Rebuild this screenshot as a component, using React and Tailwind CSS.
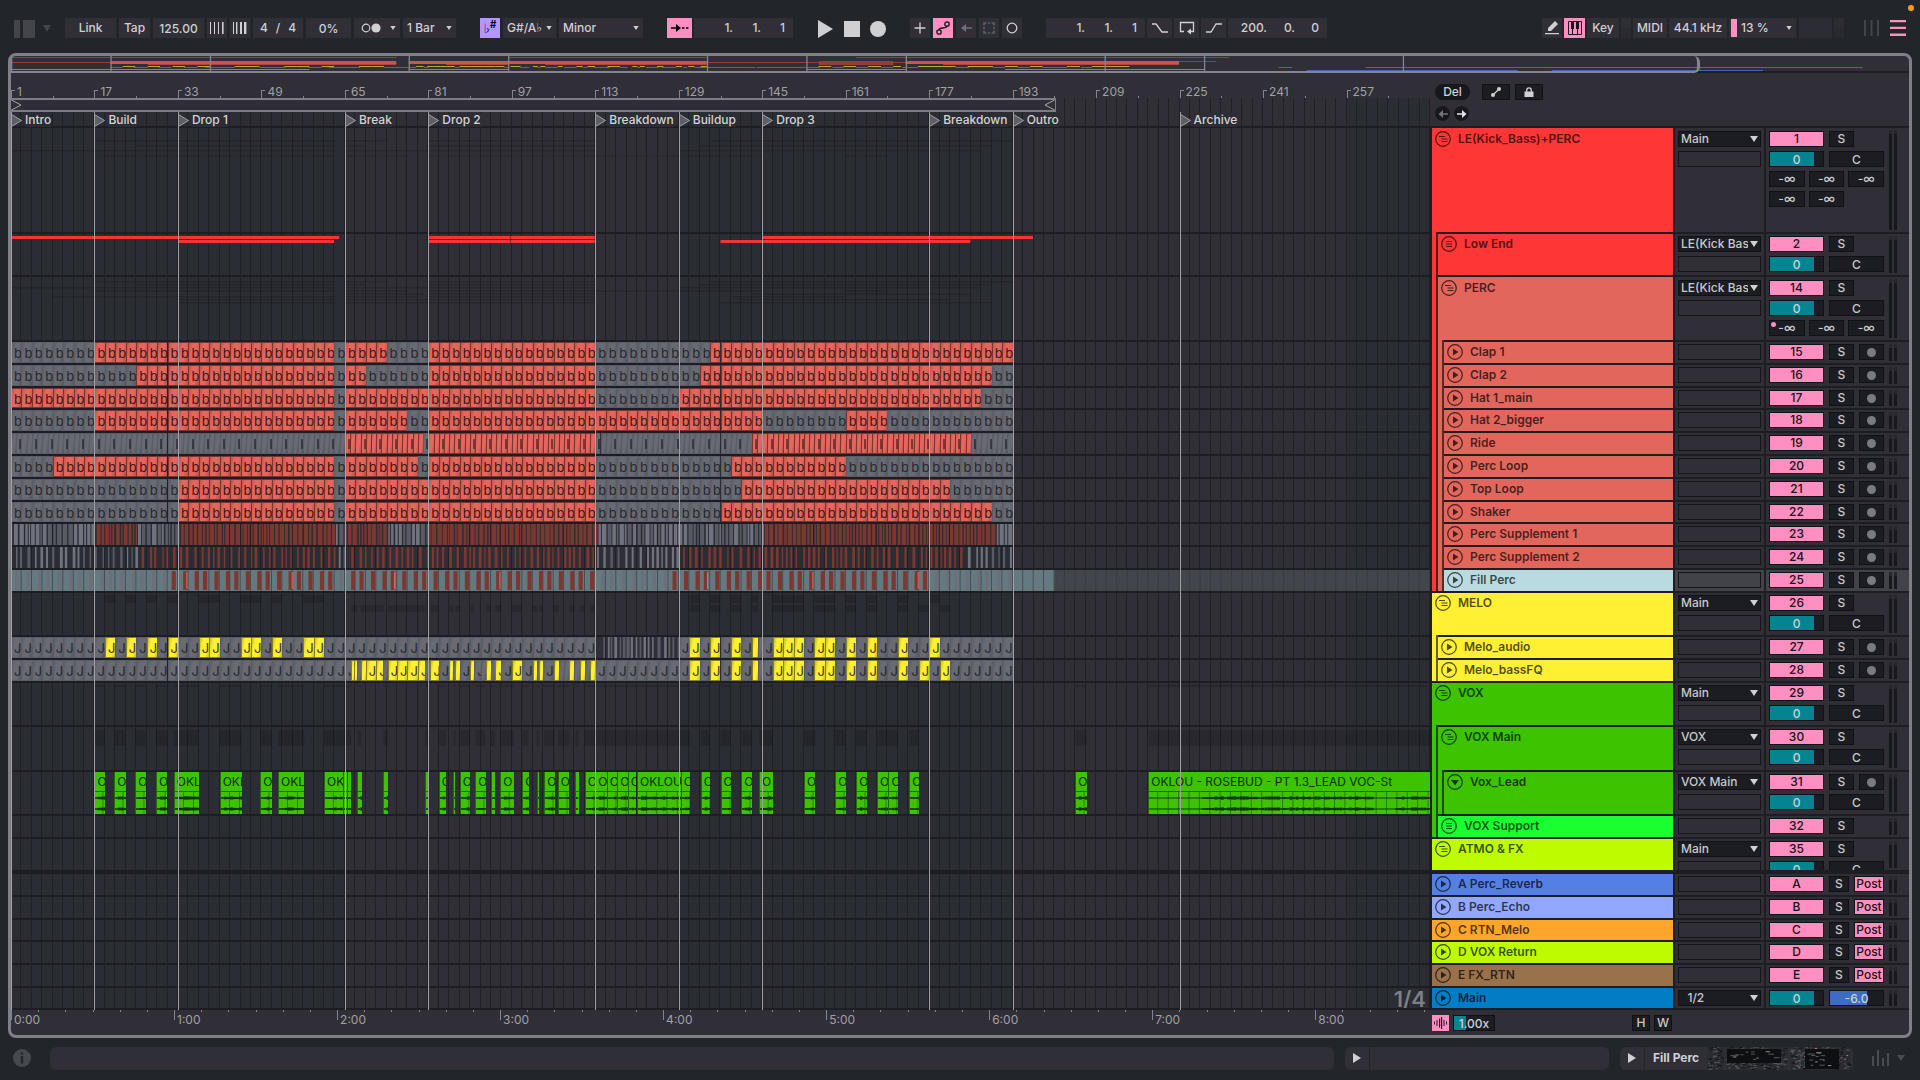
import React from "react";
import clsx from "clsx";

// One timeline unit is two bars; the visible arrangement is 136 units wide
const UNITS = 136;
const pct = (u) => `${(u / UNITS) * 100}%`;

const GRID =
    "bg-[repeating-linear-gradient(90deg,transparent_0_calc(0.735294%-1px),#1f2126_calc(0.735294%-1px)_0.735294%),repeating-linear-gradient(90deg,#2a2d33_0_23.5294%,#302f37_23.5294%_47.0588%)]";

const locators = [
    { at: 0, name: "Intro" },
    { at: 8, name: "Build" },
    { at: 16, name: "Drop 1" },
    { at: 32, name: "Break" },
    { at: 40, name: "Drop 2" },
    { at: 56, name: "Breakdown" },
    { at: 64, name: "Buildup" },
    { at: 72, name: "Drop 3" },
    { at: 88, name: "Breakdown" },
    { at: 96, name: "Outro" },
    { at: 112, name: "Archive" }
];

// Active (coloured) ranges, everything else up to unit 96 is a muted clip
const loops = {
    clap1: [[8, 31], [32, 36], [40, 56], [67, 96]],
    clap2: [[12, 31], [32, 34], [40, 56], [66, 94]],
    hat1: [[0, 31], [32, 40], [40, 56], [64, 93]],
    hat2: [[8, 31], [32, 38], [40, 56], [56, 72], [80, 84]],
    ride: [[32, 39.5], [40, 56], [71, 92]],
    perc: [[4, 31], [32, 39], [40, 56], [69, 80]],
    top: [[16, 31], [32, 40], [40, 56], [70, 90]],
    shaker: [[16, 31], [32, 40], [40, 56], [68, 94]],
    sup1: [[8, 12], [16, 31], [32, 36], [40, 56], [72, 94.3]],
    sup2: [[12, 31], [32, 40], [40, 56], [64, 91]],
    fill: [[15.5, 31], [32, 40], [40, 56], [63, 88]]
};

const meloTail = [[65, 66], [67, 68], [69, 70], [71, 71.6], [73, 74], [74, 75], [75, 76], [77, 78], [78, 79], [80, 81], [82, 83], [85, 86]];
const meloAudio = [[9, 10], [11, 12], [13, 14], [15, 16], [18, 19], [19, 20], [22, 23], [23, 24], [25, 26], [28, 29], [29, 30], ...meloTail, [88, 89]];
const meloBass = [
    [32.6, 32.9], [32.9, 33.2], [33.5, 34], [34, 35], [35, 35.7], [36.1, 37], [37, 38], [38, 39], [39, 39.7], [40.2, 41], [42, 42.4],
    [42.6, 43], [44, 44.4], [45.5, 46], [46.4, 47], [48, 49], [50, 50.4], [50.6, 51], [52, 52.5], [53.5, 54], [54.5, 55],
    [55.5, 56], ...meloTail, [87, 88], [89, 90]
];

const vox = [
    [8, 9], [9.9, 11], [11.9, 12.9], [13.9, 15], [15.6, 18], [20, 22.1], [23.9, 25], [25.6, 28.1], [30, 31.8], [31.8, 32.2],
    [32.2, 32.6], [33.2, 33.6], [35.7, 36.1], [39.7, 40], [41, 41.7], [42.4, 42.6], [43, 44], [44.5, 45.5], [46, 46.4],
    [46.9, 48.2], [49, 49.6], [50.4, 50.6], [51.1, 52.1], [52.4, 53.5], [54.1, 54.4], [55, 56], [56, 57.1], [57.1, 58.1],
    [58.1, 59.1], [59.1, 59.9], [60, 64.2], [64.2, 65.1], [66.1, 67], [68, 69], [70, 71], [71.7, 73], [76, 77.1], [79, 80],
    [81, 82], [83, 84.1], [84.1, 85], [86.1, 87], [102, 103.1], [109, 136]
];

const lowEnd = [
    [0, 31.5, 0], [16, 31, 1], [40, 47.9, 0], [47.9, 56, 0], [40, 47.9, 1], [47.9, 56, 1], [68, 92, 1], [72, 98, 0]
];

const tracks = [
    { n: "1", name: "LE(Kick_Bass)+PERC", depth: 0, icon: "group", h: 106, bg: "bg-[#ff3636]", out: "Main", sends: 5, vol: true, lane: "leGroup" },
    { n: "2", name: "Low End", depth: 1, icon: "folded", h: 43, bg: "bg-[#ff3636]", out: "LE(Kick Bass)", vol: true, lane: "low" },
    { n: "14", name: "PERC", depth: 1, icon: "group", h: 65, bg: "bg-[#e2665c]", out: "LE(Kick Bass)", sends: 3, vol: true, lane: "percGroup" },
    { n: "15", name: "Clap 1", depth: 2, h: 23, bg: "bg-[#e2665c]", rec: true, lane: "clap1" },
    { n: "16", name: "Clap 2", depth: 2, h: 23, bg: "bg-[#e2665c]", rec: true, lane: "clap2" },
    { n: "17", name: "Hat 1_main", depth: 2, h: 22, bg: "bg-[#e2665c]", rec: true, lane: "hat1" },
    { n: "18", name: "Hat 2_bigger", depth: 2, h: 23, bg: "bg-[#e2665c]", rec: true, lane: "hat2" },
    { n: "19", name: "Ride", depth: 2, h: 23, bg: "bg-[#e2665c]", rec: true, lane: "ride" },
    { n: "20", name: "Perc Loop", depth: 2, h: 23, bg: "bg-[#e2665c]", rec: true, lane: "perc" },
    { n: "21", name: "Top Loop", depth: 2, h: 23, bg: "bg-[#e2665c]", rec: true, lane: "top" },
    { n: "22", name: "Shaker", depth: 2, h: 22, bg: "bg-[#e2665c]", rec: true, lane: "shaker" },
    { n: "23", name: "Perc Supplement 1", depth: 2, h: 23, bg: "bg-[#e2665c]", rec: true, lane: "sup1" },
    { n: "24", name: "Perc Supplement 2", depth: 2, h: 23, bg: "bg-[#e2665c]", rec: true, lane: "sup2" },
    { n: "25", name: "Fill Perc", depth: 2, h: 23, bg: "bg-[#b8dae0]", rec: true, selected: true, lane: "fill" },
    { n: "26", name: "MELO", depth: 0, icon: "group", h: 44, bg: "bg-[#fff034]", out: "Main", vol: true, lane: "meloGroup" },
    { n: "27", name: "Melo_audio", depth: 1, h: 23, bg: "bg-[#fff034]", rec: true, lane: "meloAudio", family: "yellow" },
    { n: "28", name: "Melo_bassFQ", depth: 1, h: 23, bg: "bg-[#fff034]", rec: true, lane: "meloBass", family: "yellow" },
    { n: "29", name: "VOX", depth: 0, icon: "group", h: 44, bg: "bg-[#3dc300]", out: "Main", vol: true, lane: "voxGroup" },
    { n: "30", name: "VOX Main", depth: 1, icon: "group", h: 45, bg: "bg-[#3dc300]", out: "VOX", vol: true, lane: "voxMain", family: "green" },
    { n: "31", name: "Vox_Lead", depth: 2, icon: "open", h: 44, bg: "bg-[#3dc300]", out: "VOX Main", vol: true, rec: true, lane: "vox", family: "green" },
    { n: "32", name: "VOX Support", depth: 1, icon: "folded", h: 23, bg: "bg-[#1aff2f]", family: "green" },
    { n: "35", name: "ATMO & FX", depth: 0, icon: "group", h: 33, bg: "bg-[#bffb00]", out: "Main", vol: true }
];

const returns = [
    { n: "A", name: "A Perc_Reverb", h: 23, bg: "bg-[#5480e4]" },
    { n: "B", name: "B Perc_Echo", h: 23, bg: "bg-[#92a7ff]" },
    { n: "C", name: "C RTN_Melo", h: 22, bg: "bg-[#ffa529]" },
    { n: "D", name: "D VOX Return", h: 23, bg: "bg-[#bffb00]" },
    { n: "E", name: "E FX_RTN", h: 23, bg: "bg-[#99724b]" }
];

const strips = {
    red: ["bg-[#ff3636]", "bg-[#e2665c]"],
    yellow: ["bg-[#fff034]", "bg-[#fff034]"],
    green: ["bg-[#3dc300]", "bg-[#3dc300]"]
};

// Small repeatable random source for stripes and wave forms
const seeded = (seed) => () => {
    seed = (seed * 16807) % 2147483647;
    return seed / 2147483647;
};

const inside = (ranges, u) => ranges.some(([a, b]) => u >= a && u < b);

/* ---------- icons ---------- */

const TrackIcon = ({ type = "play" }) => (
    <svg viewBox="0 0 16 16" className="size-4 shrink-0 text-black/70" fill="none" stroke="currentColor">
        <circle cx="8" cy="8" r="7.3" strokeWidth="1.2" />
        {type === "group" && <path d="M4 5.500h6M6.500 8h6M6.500 10.500h6" strokeWidth="1.200" />}
        {type === "folded" && <path d="M5 5.500h6M5 8h6M5 10.500h6" strokeWidth="1.200" />}
        {type === "play" && <path d="M6 4.5v7L11.5 8z" fill="currentColor" stroke="none" />}
        {type === "open" && <path d="M4 6h8l-4 5.5z" fill="currentColor" stroke="none" />}
    </svg>
);

const Caret = ({ className }) => (
    <svg viewBox="0 0 8 6" className={clsx("pointer-events-none absolute", className)}>
        <path d="M0 0h8L4 6z" fill="currentColor" />
    </svg>
);

const Metronome = ({ bars }) => (
    <button aria-label="Nudge" className="flex h-5 w-5 items-center justify-center bg-[#302f37]">
        <svg viewBox="0 0 14 12" className="h-3 w-3.5">
            {bars.map(([x, w]) => <rect key={x} x={x} width={w} height="12" fill="#d0d0d3" />)}
        </svg>
    </button>
);

/* ---------- lanes ---------- */

const clipColors = {
    red: "bg-[linear-gradient(100deg,#c65a51_0_8%,#e4665c_30%_62%,#b5514a)] border-[#7c3430] text-[#3a1614]",
    grey: "bg-[linear-gradient(100deg,#5f6169_0_8%,#696b74_30%_62%,#54575d)] border-[#5a5d65] text-[#25272c]",
    yellow: "bg-[linear-gradient(100deg,#d6c82a_0_8%,#fff034_30%_70%,#c8bb2a)] border-[#8a811c] text-[#3a360a]"
};

const Clip = ({ from, to, color, label }) => (
    <div
        className={clsx("absolute inset-y-0 overflow-hidden border-y border-l pl-0.5 text-[13px] leading-5", clipColors[color])}
        style={{ left: pct(from), width: pct(to - from) }}
    >
        {label}
    </div>
);

const LoopLane = ({ ranges }) =>
    Array.from({ length: 96 }, (_, k) => (
        <Clip key={k} from={k} to={k + 1} label="b" color={inside(ranges, k) ? "red" : "grey"} />
    ));

const RideLane = ({ ranges }) => (
    <>
        {Array.from({ length: 192 }, (_, k) => (
            <Clip key={k} from={k / 2} to={k / 2 + 0.5} color={inside(ranges, k / 2) ? "red" : "grey"} />
        ))}
        {Array.from({ length: 64 }, (_, k) => (
            <div key={k} className="absolute top-1.5 h-2.5 w-0.5 bg-black/45" style={{ left: pct(k * 1.5 + 0.8) }} />
        ))}
    </>
);

const MeloLane = ({ ranges, sparse }) => {
    const muted = [];
    let prev = 0;
    [...ranges, [96, 96]].forEach(([a, b]) => {
        for (let u = prev; u < a - 0.05; ) {
            const next = Math.min(Math.floor(u + 1.001), a);
            if (!(sparse && u >= 56 && u < 64)) muted.push([u, next]);
            u = next;
        }
        prev = b;
    });
    return (
        <>
            {muted.map(([a, b]) => <Clip key={a} from={a} to={b} color="grey" label={b - a > 0.6 ? "J" : ""} />)}
            {ranges.map(([a, b]) => <Clip key={a} from={a} to={b} color="yellow" label={b - a > 0.6 ? "J" : ""} />)}
        </>
    );
};

const StripeLane = ({ active, from = 0, to = 96, seed, width, gap }) => {
    const rnd = seeded(seed);
    const bars = [];
    for (let x = from * 10; x < to * 10; ) {
        const w = width[0] + rnd() * width[1];
        bars.push({ x, w, fill: inside(active, x / 10) ? "#7d3731" : rnd() > 0.4 ? "#70737e" : "#585b64" });
        x += w + gap[0] + rnd() * gap[1];
    }
    return (
        <svg viewBox="0 0 1360 20" preserveAspectRatio="none" className="absolute inset-0 size-full">
            {bars.map((b) => <rect key={b.x} x={b.x} width={b.w} height="20" fill={b.fill} />)}
        </svg>
    );
};

const FillLane = ({ ranges }) => (
    <svg viewBox="0 0 1360 20" preserveAspectRatio="none" className="absolute inset-0 size-full">
        <rect width="1360" height="20" fill="#43454c" />
        <rect width="1000" height="20" fill="#657a80" />
        {Array.from({ length: 136 }, (_, k) => <rect key={k} x={k * 10 + 9.2} width="0.9" height="20" fill="#35383f" opacity="0.7" />)}
        {Array.from({ length: 96 }, (_, k) => {
            const hot = inside(ranges, k + 0.6);
            const x = k * 10 + 4 + (k % 3);
            return (
                <g key={k}>
                    <rect x={x} y="1" width={hot ? 4 : 3} height="18" fill={hot ? "#7d3731" : "#6c6f7a"} />
                    {hot && k % 10 === 6 && <rect x={x + 3} y="2" width="1" height="16" fill="#e2665c" />}
                </g>
            );
        })}
    </svg>
);

const Shadows = ({ ranges, y, h, height }) => (
    <svg viewBox={`0 0 1360 ${height}`} preserveAspectRatio="none" className="absolute inset-0 size-full">
        {ranges.map(([a, b], i) => (
            <rect key={i} x={a * 10} y={y} width={(b - a) * 10} height={h} fill="#000" opacity="0.14" />
        ))}
    </svg>
);

const VoxClip = ({ from, to }) => {
    const w = (to - from) * 10;
    const rnd = seeded(Math.round(from * 97) + 11);
    const label = w > 200 ? "OKLOU - ROSEBUD - PT 1.3_LEAD VOC-St" : w > 30 ? "OKLOU" : w > 15 ? "OKLO" : w > 6 ? "O" : "";
    const blocks = [];
    for (let x = 0; x < w; x += 3) {
        const quiet = w > 200 && (x < 50 || (x > 215 && x < 235));
        blocks.push({ x, h: quiet ? 1 : 1.5 + rnd() * 1.8 });
    }
    return (
        <div className="absolute inset-y-0 flex flex-col overflow-hidden border-l border-[#216b00] bg-[#3dc300]" style={{ left: pct(from), width: pct(to - from) }}>
            <span className="h-5 whitespace-nowrap border-b border-[#1f6a00] pl-0.5 text-[12px] leading-5 text-[#0c2a00]">{label}</span>
            <svg viewBox={`0 0 ${w} 22`} preserveAspectRatio="none" className="w-full flex-1">
                {Array.from({ length: Math.ceil(w / 10) }, (_, i) => (
                    <rect key={i} x={i * 10 + 8} width="0.9" height="22" fill="#1f6a00" opacity="0.8" />
                ))}
                {blocks.map((b) => (
                    <g key={b.x} fill="#0f2f05">
                        <rect x={b.x} y={6 - b.h / 2} width="3.1" height={b.h} />
                        <rect x={b.x} y={17 - b.h / 2} width="3.1" height={b.h} />
                    </g>
                ))}
            </svg>
        </div>
    );
};

const LaneContent = ({ lane }) => {
    if (!lane) return null;
    switch (lane) {
        case "leGroup":
            return [0, 1, 2, 3].map((i) => (
                <Shadows key={i} height={104} y={12 + i * 5} h={1.5} ranges={Object.values(loops)[i]} />
            ));
        case "low":
            return (
                <svg viewBox="0 0 1360 41" preserveAspectRatio="none" className="absolute inset-0 size-full">
                    {lowEnd.map(([a, b, row], i) => (
                        <rect key={i} x={a * 10} y={2 + row * 4} width={(b - a) * 10 - 0.5} height="3" fill="#f53434" />
                    ))}
                </svg>
            );
        case "percGroup":
            return Object.values(loops).slice(0, 8).map((r, i) => (
                <Shadows key={i} height={63} y={4 + i * 3} h={1.5} ranges={r} />
            ));
        case "ride":
            return <RideLane ranges={loops.ride} />;
        case "sup1":
            return <StripeLane active={loops.sup1} seed={41} width={[1.2, 3.2]} gap={[0.7, 0.9]} />;
        case "sup2":
            return <StripeLane active={loops.sup2} from={0.5} seed={977} width={[1.2, 1.6]} gap={[1.8, 4]} />;
        case "fill":
            return <FillLane ranges={loops.fill} />;
        case "meloGroup":
            return (
                <>
                    <Shadows height={42} y={2} h={8} ranges={meloAudio} />
                    <Shadows height={42} y={12} h={7} ranges={meloBass} />
                </>
            );
        case "meloAudio":
            return (
                <>
                    <StripeLane active={[]} from={56.8} to={64} seed={5} width={[1, 2.5]} gap={[0.7, 3]} />
                    <MeloLane ranges={meloAudio} sparse />
                </>
            );
        case "meloBass":
            return <MeloLane ranges={meloBass} />;
        case "voxGroup":
            return <Shadows height={42} y={2} h={2} ranges={vox} />;
        case "voxMain":
            return <Shadows height={43} y={3} h={16} ranges={vox} />;
        case "vox":
            return vox.map(([a, b]) => <VoxClip key={a} from={a} to={b} />);
        default:
            return <LoopLane ranges={loops[lane]} />;
    }
};

const Lane = ({ h, lane, children }) => (
    <div className="border-t-2 border-[#1d1e23]" style={{ height: h }}>
        <div className={clsx("relative h-full overflow-hidden", GRID)}>
            <LaneContent lane={lane} />
            {children}
        </div>
    </div>
);

/* ---------- track headers ---------- */

const box = "h-4 shrink-0 border border-[#101116] text-center text-[12px] font-medium leading-[14px]";
const darkBox = "bg-[#1c1d22] text-[#c8c8cb]";
const pinkBox = "bg-[#ff8fc0] text-[#1a1015]";

const Meter = () => (
    <div className="absolute inset-y-0.5 left-[123px] flex gap-[2px]">
        <div className="w-[3px] border-t-4 border-[#26262c] bg-[#17181c]" />
        <div className="w-[3px] border-t-4 border-[#26262c] bg-[#17181c]" />
    </div>
);

const Routing = ({ value, label }) => (
    <div className="relative">
        <select aria-label={label} className={clsx("block w-full appearance-none overflow-hidden pl-0.5 pr-3", box, darkBox, "text-left!")}>
            <option>{value}</option>
        </select>
        <Caret className="top-[5px] right-[3px] h-1.5 w-2 text-[#d0d0d3]" />
    </div>
);

const NameCell = ({ t, pad }) => {
    const family = strips[t.family || "red"];
    return (
        <div className="flex w-[241px] shrink-0 overflow-hidden">
            {Array.from({ length: t.depth || 0 }, (_, i) => (
                <div key={i} className={clsx("w-1.5 shrink-0 border-r-2 border-black/60", family[i])} />
            ))}
            <div className="flex-1 border-t-2 border-[#1d1e23]">
                <div className={clsx("flex h-full items-start gap-[7px] pl-[3px] text-[12px] font-semibold leading-4 text-black/70", t.bg, pad)}>
                    <TrackIcon type={t.icon} />
                    <span className="whitespace-nowrap">{t.name}</span>
                </div>
            </div>
        </div>
    );
};

const Row = ({ t, io, children }) => {
    // rows with sends sit one pixel lower
    const pad = t.sends ? "pt-[3px]" : "pt-0.5";
    return (
        <div className="flex gap-0.5 overflow-hidden bg-[#1d1e23] pl-0.5" style={{ height: t.h }}>
            <NameCell t={t} pad={pad} />
            <div className={clsx("flex w-[89px] shrink-0 flex-col gap-1 border-t-2 border-[#1d1e23] px-[3px]", pad, t.selected ? "bg-[#414349]" : "bg-[#302f37]")}>
                {io}
                {t.n !== "M" && <div className="h-4 shrink-0 border border-[#141519]" />}
            </div>
            <div className={clsx("relative w-[143px] shrink-0 border-t-2 border-[#1d1e23] pl-[3px]", pad, t.selected ? "bg-[#414349]" : "bg-[#302f37]")}>
                <div className="flex w-[115px] flex-col gap-1">{children}</div>
                <Meter />
            </div>
        </div>
    );
};

const TrackRow = ({ t }) => (
    <Row t={t} io={t.out && <Routing value={t.out} label={`Output of ${t.name}`} />}>
        <div className="flex gap-[5px]">
            <button className={clsx(box, pinkBox, "w-[55px]")}>{t.n}</button>
            <button className={clsx(box, darkBox, "w-[25px]")}>S</button>
            {t.rec && (
                <button aria-label={`Arm ${t.name}`} className={clsx(box, darkBox, "flex w-[25px] items-center justify-center")}>
                    <span className="size-[9px] rounded-full bg-[#797a82]" />
                </button>
            )}
        </div>
        {t.vol && (
            <div className="flex gap-[5px]">
                <input aria-label={`Volume of ${t.name}`} defaultValue="0" className={clsx(box, "w-[55px] bg-[linear-gradient(90deg,#048391_83%,#1c1d22_83%)] text-[#d0d0d3]")} />
                <input aria-label={`Pan of ${t.name}`} defaultValue="C" className={clsx(box, darkBox, "w-[55px]")} />
            </div>
        )}
        {t.sends && (
            <div className="relative grid grid-cols-3 gap-1">
                {Array.from({ length: t.sends }, (_, i) => (
                    <button key={i} className={clsx(box, darkBox)}>-∞</button>
                ))}
                {t.n === "14" && <span className="absolute top-0.5 left-0.5 size-[5px] rounded-full bg-[#ff8fc0]" />}
            </div>
        )}
    </Row>
);

const ReturnRow = ({ t }) => (
    <Row t={t}>
        <div className="flex gap-[5px]">
            <button className={clsx(box, pinkBox, "w-[55px]")}>{t.n}</button>
            <button className={clsx(box, darkBox, "w-5")}>S</button>
            <button className={clsx(box, pinkBox, "w-[30px]")}>Post</button>
        </div>
    </Row>
);

const MainRow = () => (
    <Row t={{ n: "M", name: "Main", h: 22, bg: "bg-[#007dc4]" }} io={<Routing value={"\u00a0\u00a01/2"} label="Main output" />}>
        <div className="flex gap-[5px]">
            <input aria-label="Cue volume" defaultValue="0" className={clsx(box, "w-[55px] bg-[linear-gradient(90deg,#048391_83%,#1c1d22_83%)] text-[#d0d0d3]")} />
            <input aria-label="Main volume" defaultValue="-6.0" className={clsx(box, "w-[55px] bg-[linear-gradient(90deg,#3d6cc4_70%,#1c1d22_70%)] text-[#d0d0d3]")} />
        </div>
    </Row>
);

/* ---------- toolbar ---------- */

const tool = "block h-5 bg-[#302f37] text-center text-[12px] font-medium text-[#d0d0d3]";
const iconTool = "flex h-5 items-center justify-center bg-[#302f37] text-[#d0d0d3]";

const ToolSelect = ({ value, label, className }) => (
    <div className={clsx("relative", className)}>
        <select aria-label={label} className={clsx(tool, "w-full appearance-none pl-1 text-left!")}>
            <option>{value}</option>
        </select>
        <Caret className="top-2 right-1 h-1 w-1.5 text-[#d0d0d3]" />
    </div>
);

const Position = ({ values, label }) => (
    <div className="flex h-5 w-[99px] justify-end bg-[#302f37] pr-2 text-[12px] font-medium text-[#d0d0d3]">
        {values.map((v, i) => (
            <input key={i} aria-label={`${label} ${i + 1}`} defaultValue={v} className={clsx("text-right", i === 2 ? "w-6" : "w-7")} />
        ))}
    </div>
);

const Toolbar = () => (
    <header className="flex h-[53px] items-start pt-[18px] pr-3.5 pl-3.5">
        <svg viewBox="0 0 38 18" className="mt-0.5 mr-[13px] h-[18px] w-[38px]" fill="#43454b">
            <rect width="6" height="18" />
            <rect x="9" width="12" height="18" />
            <path d="M29 5h8l-4 7z" />
        </svg>
        <div className="flex gap-[3px]">
            <button className={clsx(tool, "w-[51px]")}>Link</button>
            <button className={clsx(tool, "w-[31px]")}>Tap</button>
            <input aria-label="Tempo" defaultValue="125.00" className={clsx(tool, "w-[51px]")} />
            <Metronome bars={[[0, 1], [4, 1], [8, 1], [12, 1.6]]} />
            <Metronome bars={[[0, 1], [3, 1.4], [7, 2], [11, 2.4]]} />
            <div className="flex h-5 w-[50px] items-center justify-center gap-2 bg-[#302f37] text-[12px] font-medium text-[#d0d0d3]">
                <span>4</span>
                <span>/</span>
                <span>4</span>
            </div>
            <input aria-label="Groove amount" defaultValue="0%" className={clsx(tool, "w-[45px]")} />
            <button aria-label="Metronome" className={clsx(iconTool, "relative w-[46px]")}>
                <svg viewBox="0 0 20 10" className="mr-3 h-2.5 w-5">
                    <circle cx="5" cy="5" r="3.8" fill="none" stroke="currentColor" strokeWidth="1.2" />
                    <circle cx="15" cy="5" r="4.6" fill="currentColor" />
                </svg>
                <Caret className="top-2 right-1 h-1 w-1.5" />
            </button>
            <ToolSelect value="1 Bar" label="Quantization" className="w-[53px]" />
        </div>
        <div className="ml-6 flex gap-[3px]">
            <button aria-label="Scale mode" className="h-5 w-5 bg-[#b595ff] text-[13px] font-bold leading-5 text-black">♭<sup>#</sup></button>
            <ToolSelect value="G#/A♭" label="Root note" className="w-[53px]" />
            <ToolSelect value="Minor" label="Scale" className="w-[84px]" />
        </div>
        <div className="ml-6 flex gap-0.5">
            <button aria-label="Follow" className="flex h-5 w-[25px] items-center justify-center bg-[#ff8fc0]">
                <svg viewBox="0 0 18 10" className="h-2.5 w-[18px]">
                    <path d="M0 4.3h5V1l5 4-5 4V5.700H0z" />
                    <path d="M11 4.200h2.500v1.600H11zM15 4.200h2.500v1.600H15z" />
                </svg>
            </button>
            <Position values={["1.", "1.", "1"]} label="Position" />
        </div>
        <div className="ml-[23px] flex gap-2.5 pt-0.5 text-[#d0d0d3]">
            <button aria-label="Play">
                <svg viewBox="0 0 18 18" className="size-[18px]"><path d="M2 0v18L17 9z" fill="currentColor" /></svg>
            </button>
            <button aria-label="Stop">
                <svg viewBox="0 0 16 18" className="h-[18px] w-4"><path d="M0 1h16v16H0z" fill="currentColor" /></svg>
            </button>
            <button aria-label="Record">
                <svg viewBox="0 0 16 18" className="h-[18px] w-4"><circle cx="8" cy="9" r="8" fill="currentColor" /></svg>
            </button>
        </div>
        <div className="ml-6 flex gap-[3px]">
            <button aria-label="Overdub" className={clsx(iconTool, "w-5")}>
                <svg viewBox="0 0 12 12" className="size-3"><path d="M6 0.500v11M0.500 6h11" stroke="currentColor" strokeWidth="1.300" /></svg>
            </button>
            <button aria-label="Automation arm" className="flex h-5 w-5 items-center justify-center bg-[#ff8fc0]">
                <svg viewBox="0 0 14 14" className="size-3.5" fill="none" stroke="#17131a" strokeWidth="1.300">
                    <circle cx="3" cy="11" r="2.200" />
                    <circle cx="11" cy="3" r="2.200" />
                    <path d="M3 8.800C3 6 11 8 11 5.200" />
                </svg>
            </button>
            <button aria-label="Re-enable automation" className={clsx(iconTool, "w-5 text-[#6f7077]!")}>
                <svg viewBox="0 0 12 10" className="h-2.5 w-3" fill="currentColor"><path d="M12 4.200H6V1L1 5l5 4V5.800h6z" /></svg>
            </button>
            <button aria-label="Capture" className={clsx(iconTool, "w-5 text-[#6f7077]!")}>
                <svg viewBox="0 0 12 12" className="size-3" fill="none" stroke="currentColor" strokeWidth="1.200">
                    <path d="M1 3.500V1h2.500M8.500 1H11v2.500M11 8.500V11H8.500M3.500 11H1V8.500M5 1h2M5 11h2M1 5v2M11 5v2" />
                </svg>
            </button>
            <button aria-label="Session record" className={clsx(iconTool, "w-5")}>
                <svg viewBox="0 0 12 12" className="size-3"><circle cx="6" cy="6" r="4.800" fill="none" stroke="currentColor" strokeWidth="1.300" /></svg>
            </button>
        </div>
        <div className="ml-6 flex gap-0.5">
            <Position values={["1.", "1.", "1"]} label="Loop start" />
            <button aria-label="Punch in" className={clsx(iconTool, "w-[25px]")}>
                <svg viewBox="0 0 16 10" className="h-2.5 w-4" fill="none" stroke="currentColor" strokeWidth="1.300"><path d="M0 1h4l6 8h6" /></svg>
            </button>
            <button aria-label="Loop" className={clsx(iconTool, "w-[25px]")}>
                <svg viewBox="0 0 16 14" className="h-3.5 w-4" fill="none" stroke="currentColor" strokeWidth="1.300">
                    <path d="M5 10.500H1.500v-9h13v9H10" />
                    <path d="M12 7.500v6L8 10.500z" fill="currentColor" stroke="none" />
                </svg>
            </button>
            <button aria-label="Punch out" className={clsx(iconTool, "w-[25px]")}>
                <svg viewBox="0 0 16 10" className="h-2.5 w-4" fill="none" stroke="currentColor" strokeWidth="1.300"><path d="M0 9h5l5-8h6" /></svg>
            </button>
            <Position values={["200.", "0.", "0"]} label="Loop length" />
        </div>
        <div className="ml-auto flex gap-0.5">
            <button aria-label="Draw mode" className={clsx(iconTool, "w-5")}>
                <svg viewBox="0 0 14 14" className="size-3.5" fill="currentColor"><path d="M10 0l3 3-7 7H3V7zM0 12h14v1.300H0z" /></svg>
            </button>
            <button aria-label="Computer MIDI keyboard" className="flex h-5 w-[21px] items-center justify-center bg-[#ff8fc0]">
                <svg viewBox="0 0 14 14" className="size-3.5">
                    <path d="M0.500 0.500h13v13h-13zM4.500 8v6M9.500 8v6" fill="none" stroke="#17131a" />
                    <path d="M3 0h3v8H3zM8 0h3v8H8z" fill="#17131a" />
                </svg>
            </button>
            <button className={clsx(tool, "w-8")}>Key</button>
            <div className="w-2.5 border-t-[10px] border-[#2e2e36] bg-[#2a2a31]" />
            <button className={clsx(tool, "w-[34px]")}>MIDI</button>
            <button className={clsx(tool, "w-[58px]")}>44.1 kHz</button>
            <div className="flex bg-[#302f37] pl-0.5">
                <div className="my-px w-1.5 bg-[#ff8fc0]" />
                <ToolSelect value="13 %" label="CPU load" className="w-[59px]" />
            </div>
            <div className="ml-px w-[33px] bg-[#2c2d34]" />
            <div className="w-2.5 border-t-[10px] border-[#2c2d34] bg-[#292a30]" />
            <svg viewBox="0 0 16 16" className="mt-0.5 ml-[18px] size-4" fill="#45464d"><path d="M0 0h2v16H0zM6.500 0h2v16h-2zM13 0h2v16h-2z" /></svg>
            <svg viewBox="0 0 16 16" className="mt-0.5 ml-2 size-4" fill="#ff8fc0"><path d="M0 0h16v2.300H0zM0 6.800h16v2.300H0zM0 13.600h16v2.300H0z" /></svg>
        </div>
        <span className="absolute top-[5px] right-1.5 size-1.5 rounded-full bg-[#ff9f0a]" />
    </header>
);

/* ---------- overview ---------- */

const Overview = () => {
    const thick = [[8, 31], [32, 40], [40, 56], [72, 94]];
    const u = (v) => v * 12.42;
    return (
        <div className="relative h-[17px] border-b-2 border-[#1d1e23]">
            <svg viewBox="0 0 1897 15" preserveAspectRatio="none" className="block h-[15px] w-full">
                <g fill="#9b3a3a">
                    <rect x="0" y="1" width={u(31)} height="1" />
                    <rect x={u(40)} y="1" width={u(16)} height="1" />
                    <rect x={u(68)} y="1" width={u(30)} height="1" />
                    <rect x="0" y="6" width={u(8)} height="1" />
                    <rect x={u(56)} y="6" width={u(16)} height="1" />
                    <rect x={u(94)} y="5" width={u(3)} height="1" />
                </g>
                {thick.map(([a, b]) => (
                    <g key={a}>
                        <rect x={u(a)} y="5" width={u(b - a)} height="3" fill="#c9564e" />
                        <rect x={u(a + 3)} y="8" width={u(b - a - 3)} height="1" fill="#a8463f" />
                    </g>
                ))}
                <rect x={u(65)} y="5" width={u(6)} height="4" fill="#8f403c" />
                {[...meloAudio, ...meloBass].map(([a, b], i) => <rect key={i} x={u(a)} y="10" width={u(b - a)} height="1" fill="#b3a92c" />)}
                {vox.map(([a, b]) => <rect key={a} x={u(a)} y="11" width={u(a > 108 ? 40 : b - a)} height="1" fill="#3a8a18" />)}
                {[[0, 24], [32, 40], [64, 72], [80, 96]].map(([a, b]) => <rect key={a} x={u(a)} y="13" width={u(b - a)} height="1" fill="#7f9a1c" />)}
                <rect x="1295" y="14" width="211" height="1" fill="#4666b4" />
                <rect x="1540" y="14" width="211" height="1" fill="#4666b4" />
                {locators.map((l, i) => <rect key={i} x={u(l.at)} width="1.300" height="15" fill="#85858f" />)}
            </svg>
            <div className="absolute top-0 left-0 h-[17px] w-[89%] rounded-r-md border-r-3 border-b-2 border-[#85858f]" />
        </div>
    );
};

/* ---------- rulers ---------- */

const BarRuler = () => (
    <div className="relative h-[25px] text-[12px] text-[#a0a0a6]">
        {Array.from({ length: 17 }, (_, i) => (
            <div key={i} className="absolute bottom-0 flex items-end" style={{ left: pct(i * 8) }}>
                <span className="h-2 w-1 border-t border-l border-[#85858f]" />
                <span className="pl-0.5 leading-[13px]">{i * 16 + 1}</span>
            </div>
        ))}
        {Array.from({ length: 17 }, (_, i) => (
            <span key={i} className="absolute bottom-0 h-0.5 w-px bg-[#85858f]" style={{ left: pct(i * 8 + 4) }} />
        ))}
    </div>
);

const LoopBrace = () => (
    <div className={clsx("h-3.5", GRID)}>
        <div className="flex h-full justify-between border-y-2 border-r border-[#7d7d86] bg-[#302f37]" style={{ width: pct(100.2) }}>
            <svg viewBox="0 0 11 10" className="h-2.5 w-[11px]" fill="none" stroke="#a8a8ae"><path d="M0.500 0l9.500 5-9.500 5" /></svg>
            <svg viewBox="0 0 11 10" className="h-2.5 w-[11px]" fill="none" stroke="#a8a8ae"><path d="M10.500 0L1 5l9.500 5" /></svg>
        </div>
    </div>
);

const Locators = () => (
    <div className={clsx("relative h-3.5", GRID)}>
        {locators.map((l) => (
            <button key={l.at} className="absolute top-px z-10 flex h-3.5 items-center gap-[3px] text-[12px] font-medium leading-[14px] text-[#d3d3d6]" style={{ left: pct(l.at) }}>
                <svg viewBox="0 0 11 13" className="h-[13px] w-[11px]"><path d="M0.500 0.500L10.500 6.500 0.500 12.500z" fill="#5c5f67" stroke="#a0a0a6" /></svg>
                <span className="bg-[#2c2d34]">{l.name}</span>
            </button>
        ))}
    </div>
);

const TimeRuler = () => (
    <div className="relative h-[25px] text-[12px] text-[#a0a0a6]">
        {Array.from({ length: 53 }, (_, i) => (
            <span key={i} className={clsx("absolute top-0 bg-[#85858f]", i % 6 ? "h-0.5 w-px" : "h-2.5 w-px")} style={{ left: pct((i * 15.625) / 6) }} />
        ))}
        {Array.from({ length: 9 }, (_, i) => (
            <span key={i} className="absolute top-[3px] pl-[3px] leading-[14px]" style={{ left: pct(i * 15.625) }}>{i}:00</span>
        ))}
    </div>
);

/* ---------- status bar ---------- */

const DeviceThumb = ({ w, seed, pink, hole }) => {
    const rnd = seeded(seed);
    return (
        <svg viewBox={`0 0 ${w} 24`} width={w} height="24">
            <rect width={w} height="24" fill="#2b2c32" />
            {Array.from({ length: w * 3 }, (_, i) => {
                const c = rnd();
                return <rect key={i} x={rnd() * (w - 3)} y={rnd() * 23} width={1 + rnd() * 3} height="1" fill={pink && c > 0.9 ? "#c86a94" : c > 0.5 ? "#55575f" : "#15161a"} />;
            })}
            {hole && <rect x={hole[0]} y="3" width={hole[1]} height={hole[2]} fill="#0e0f12" />}
            {hole && Array.from({ length: 14 }, (_, i) => (
                <rect key={i} x={hole[0] + 2 + rnd() * (hole[1] - 9)} y={5 + rnd() * (hole[2] - 5)} width={2 + rnd() * 4} height="1" fill={i % 5 ? "#55575f" : "#8a8d96"} />
            ))}
        </svg>
    );
};

const PlayGlyph = () => (
    <svg viewBox="0 0 8 10" className="h-2.5 w-2"><path d="M0 0l8 5-8 5z" fill="#d0d0d3" /></svg>
);

const StatusBar = () => (
    <footer className="flex h-[42px] items-center gap-[11px] pr-3.5 pl-[13px] pb-0.5">
        <svg viewBox="0 0 18 18" className="mr-2 size-[18px]">
            <circle cx="9" cy="9" r="9" fill="#474951" />
            <path d="M7.800 3.500h2.400v2H7.800zM7.800 7h2.400v7.500H7.800z" fill="#22262b" />
        </svg>
        <div className="h-[23px] flex-1 rounded-md bg-[#302f37]" />
        <div className="flex h-[23px] gap-px">
            <button aria-label="Show clip view" className="flex w-6 items-center justify-center rounded-l-md bg-[#302f37]"><PlayGlyph /></button>
            <div className="w-[239px] rounded-r-md bg-[#302f37]" />
        </div>
        <div className="flex h-[23px] gap-px">
            <button aria-label="Show device view" className="flex w-6 items-center justify-center rounded-l-md bg-[#302f37]"><PlayGlyph /></button>
            <div className="flex w-[208px] items-center gap-0.5 overflow-hidden rounded-r-md bg-[#302f37]">
                <span className="w-[60px] shrink-0 pl-2 text-[12px] font-bold whitespace-nowrap text-[#d0d0d3]">Fill Perc</span>
                <DeviceThumb w={17} seed={13} />
                <DeviceThumb w={62} seed={77} hole={[1, 54, 14]} />
                <DeviceThumb w={61} seed={131} pink hole={[15, 34, 20]} />
            </div>
        </div>
        <svg viewBox="0 0 34 16" className="ml-2 h-4 w-[34px]" fill="#4a4c53">
            <path d="M0 6h2v10H0zM5 0h2v16H5zM10 8h2v8h-2zM15 3h2v13h-2zM25 5h8l-4 6z" />
        </svg>
    </footer>
);

/* ---------- page ---------- */

const SideHead = () => (
    <div className="flex h-[53px] flex-col gap-1.5 pt-[11px] pl-[5px]">
        <div className="flex h-4 items-center">
            <button className="h-4 w-[35px] rounded-full bg-[#17181d] text-[12px] font-medium leading-4 text-[#d0d0d3]">Del</button>
            <button aria-label="Automation mode" className="ml-3 flex h-4 w-7 items-center justify-center border border-[#101116] bg-[#1c1d22]">
                <svg viewBox="0 0 10 10" className="size-2.5" fill="#d0d0d3"><circle cx="2" cy="8" r="2" /><circle cx="8" cy="2" r="2" /><path d="M2 8l6-6" stroke="#d0d0d3" strokeWidth="1.300" /></svg>
            </button>
            <button aria-label="Lock envelopes" className="ml-[5px] flex h-4 w-7 items-center justify-center border border-[#101116] bg-[#1c1d22]">
                <svg viewBox="0 0 10 10" className="size-2.5"><path d="M0.500 4.500h9V10h-9z" fill="#d0d0d3" /><path d="M2.700 5V3.200a2.300 2.300 0 014.600 0V5" fill="none" stroke="#d0d0d3" strokeWidth="1.300" /></svg>
            </button>
        </div>
        <div className="flex gap-1">
            <button aria-label="Previous locator" className="flex size-[15px] items-center justify-center rounded-full bg-[#17181d] text-[#74757c]">
                <svg viewBox="0 0 10 8" className="h-2 w-2.5" fill="currentColor"><path d="M10 3.300H5V0L0.500 4 5 8V4.700h5z" /></svg>
            </button>
            <button aria-label="Next locator" className="flex size-[15px] items-center justify-center rounded-full bg-[#17181d] text-[#e4e4e6]">
                <svg viewBox="0 0 10 8" className="h-2 w-2.5" fill="currentColor"><path d="M0 3.300h5V0l4.500 4L5 8V4.700H0z" /></svg>
            </button>
        </div>
    </div>
);

const SideFoot = () => (
    <div className="flex h-[25px] items-start gap-1 pt-[5px] pl-0.5">
        <button aria-label="Optimize height" className="flex h-4 w-[17px] items-center justify-center bg-[#ff8fc0]">
            <svg viewBox="0 0 13 12" className="h-3 w-[13px]"><path d="M0 4.500h1v3H0zM2.500 3h1v6h-1zM5 1.500h1.200v9H5zM7 0h1.200v12H7zM9.500 3h1v6h-1zM12 4.500h1v3h-1z" fill="#17131a" /></svg>
        </button>
        <input aria-label="Waveform zoom" defaultValue="1.00x" className={clsx(box, "w-[42px] bg-[linear-gradient(90deg,#048391_30%,#1c1d22_30%)] text-[#d0d0d3]")} />
        <button className={clsx(box, darkBox, "ml-[133px] w-[18px]")}>H</button>
        <button className={clsx(box, darkBox, "w-[18px]")}>W</button>
    </div>
);

export default function App() {
    return (
        <div className="relative min-h-screen overflow-hidden bg-[#22262b] font-['Inter','DejaVu_Sans',sans-serif]">
            <Toolbar />
            <main className="mx-2 rounded-lg border-3 border-[#7f7f88] bg-[#302f37]">
                <Overview />
                <div className="flex">
                    <section className="min-w-0 flex-1">
                        <BarRuler />
                        <div className="relative">
                            <LoopBrace />
                            <Locators />
                            {tracks.map((t) => <Lane key={t.n} h={t.h} lane={t.lane} />)}
                            <div className="h-0.5 bg-[#1d1e23]" />
                            {returns.map((t) => <Lane key={t.n} h={t.h} />)}
                            <Lane h={22}>
                                <span className="absolute right-1 -bottom-px text-[22px] font-semibold leading-5 text-[#7f7f86]">1/4</span>
                            </Lane>
                            <div className="h-0.5 bg-[#1d1e23]" />
                            {locators.map((l) => (
                                <div key={l.at} className="pointer-events-none absolute top-3.5 bottom-0 w-px bg-[#a0a0a5]" style={{ left: pct(l.at) }} />
                            ))}
                        </div>
                        <TimeRuler />
                    </section>
                    <aside className="w-[479px] shrink-0">
                        <SideHead />
                        {tracks.map((t) => <TrackRow key={t.n} t={t} />)}
                        <div className="h-0.5 bg-[#1d1e23]" />
                        {returns.map((t) => <ReturnRow key={t.n} t={t} />)}
                        <MainRow />
                        <div className="h-0.5 bg-[#1d1e23]" />
                        <SideFoot />
                    </aside>
                </div>
            </main>
            <StatusBar />
        </div>
    );
}
